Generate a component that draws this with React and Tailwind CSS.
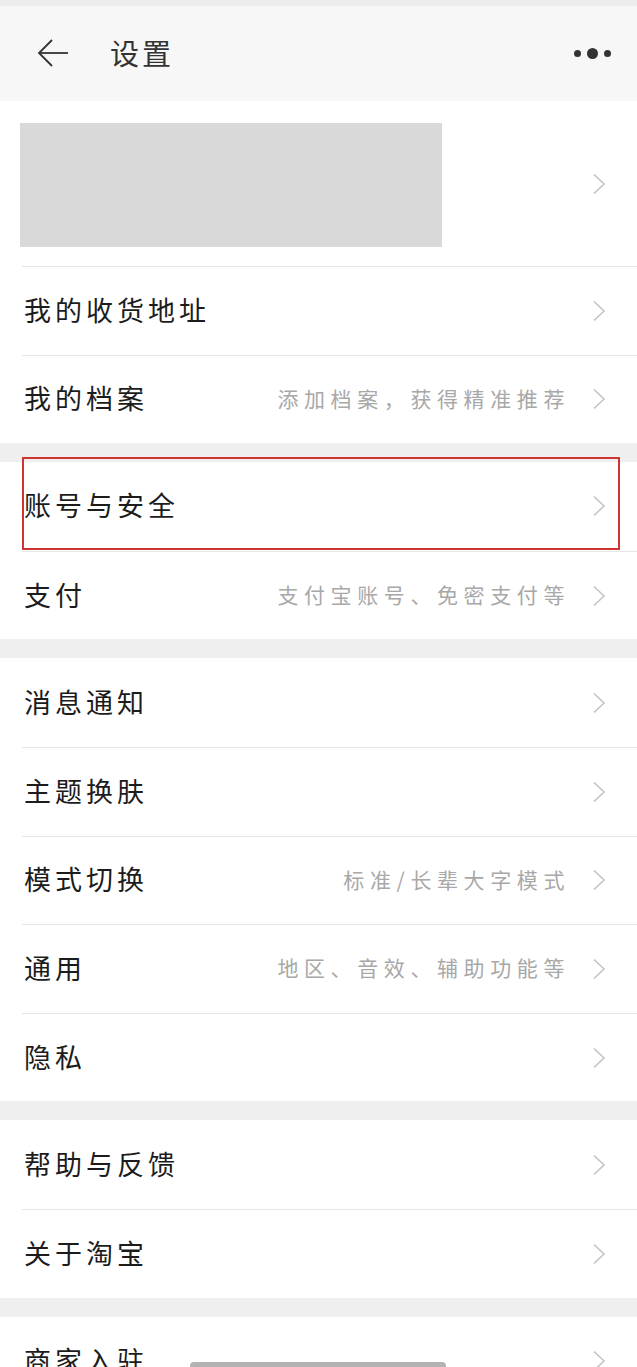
import React from "react";

const font = { fontFamily: '"Noto Sans CJK SC", "Noto Sans", sans-serif' };

function Chevron() {
  return (
    <svg width="14" height="22" viewBox="0 0 14 22" className="shrink-0">
      <polyline points="2,1.5 12,11 2,20.5" fill="none" stroke="#c4c4c4" strokeWidth="1.6" strokeLinejoin="miter" />
    </svg>
  );
}

function Row({ label, sub, first }) {
  return (
    <div className={"ml-[22px] h-[88.6px] flex items-center pr-[31px] " + (first ? "" : "border-t border-[#e6e6e6]")}>
      <div className="pl-[2px] pb-[3px] flex-1 text-[27px] tracking-[4px] text-[#1c1c1c] leading-none">{label}</div>
      {sub && (
        <div className="pb-[2px] text-[21px] tracking-[5.6px] text-[#a8a8a8] leading-none mr-[22px]">{sub}</div>
      )}
      <Chevron />
    </div>
  );
}

function Section({ children }) {
  return <div className="bg-white">{children}</div>;
}

function Gap() {
  return <div className="h-[19px] bg-[#efefef]" />;
}

export default function App() {
  return (
    <div className="relative w-[637px] h-[1367px] overflow-hidden bg-[#efefef]" style={font}>
      <div className="h-[6px] bg-[#ececec]" />
      <div className="h-[95px] bg-[#f7f7f7] flex items-center">
        <svg width="32" height="30" viewBox="0 0 32 30" className="ml-[37px]">
          <line x1="2" y1="14" x2="31" y2="14" stroke="#333" strokeWidth="1.8" />
          <polyline points="15,1 2,14 15,27" fill="none" stroke="#333" strokeWidth="1.8" />
        </svg>
        <div className="ml-[41px] pb-[3px] text-[29px] tracking-[3px] text-[#333] leading-none flex-1">设置</div>
        <div className="flex items-center gap-[6px] mr-[26px]">
          <div className="w-[7px] h-[7px] rounded-full bg-[#333]" />
          <div className="w-[11px] h-[11px] rounded-full bg-[#333]" />
          <div className="w-[7px] h-[7px] rounded-full bg-[#333]" />
        </div>
      </div>

      <Section>
        <div className="h-[165px] flex items-center pr-[31px]">
          <div className="ml-[20px] w-[422px] h-[124px] bg-[#d9d9d9] mt-[3px]" />
          <div className="flex-1" />
          <Chevron />
        </div>
        <Row label="我的收货地址" />
        <Row label="我的档案" sub="添加档案，获得精准推荐" />
      </Section>
      <Gap />
      <Section>
        <Row label="账号与安全" first />
        <Row label="支付" sub="支付宝账号、免密支付等" />
      </Section>
      <Gap />
      <Section>
        <Row label="消息通知" first />
        <Row label="主题换肤" />
        <Row label="模式切换" sub="标准/长辈大字模式" />
        <Row label="通用" sub="地区、音效、辅助功能等" />
        <Row label="隐私" />
      </Section>
      <Gap />
      <Section>
        <Row label="帮助与反馈" first />
        <Row label="关于淘宝" />
      </Section>
      <Gap />
      <Section>
        <Row label="商家入驻" first />
        <Row label="" />
      </Section>

      <div className="absolute left-[22px] top-[457px] w-[598px] h-[93px] border-[2.5px] border-[#cc3530]" />
      <div className="absolute left-[190px] top-[1362px] w-[256px] h-[8px] rounded-full bg-[#b3b3b3]" />
    </div>
  );
}
